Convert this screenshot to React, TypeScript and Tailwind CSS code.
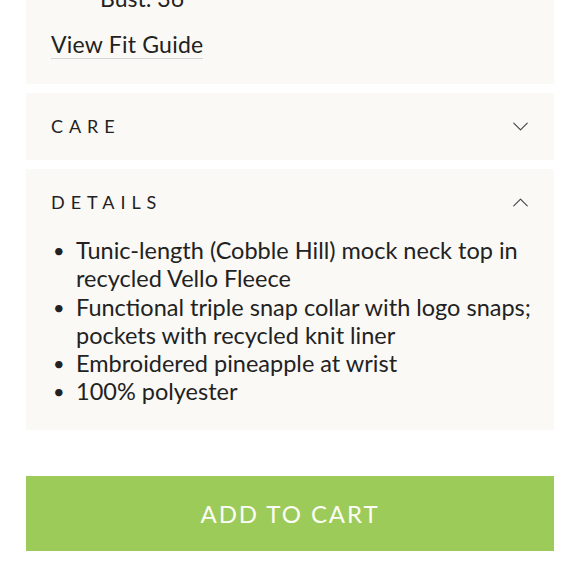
import { ChevronDown, ChevronUp } from 'lucide-react'

const details = [
  'Tunic-length (Cobble Hill) mock neck top in recycled Vello Fleece',
  'Functional triple snap collar with logo snaps; pockets with recycled knit liner',
  'Embroidered pineapple at wrist',
  '100% polyester',
]

export default function App() {
  return (
    <div className="w-[580px] h-[580px] overflow-hidden bg-white text-[#222] font-['Lato',sans-serif]">
      <div className="-mt-[22px] px-[26px] flex flex-col">

        {/* Fit */}
        <div className="bg-[#faf9f6] pl-[25px] pt-[6px] pb-[25px]">
          <p className="pl-[49px] text-[23px] leading-[28px]">Bust: 36</p>
          <a className="mt-[19px] inline-block text-[23px] leading-[26px] border-b border-[#d4d4d4] pb-[1px] tracking-[0.01em]">
            View Fit Guide
          </a>
        </div>

        {/* Care */}
        <div className="mt-[9px] h-[67px] bg-[#faf9f6] pl-[25px] pr-[20px] flex items-center justify-between">
          <span className="text-[18px] tracking-[0.33em] uppercase">Care</span>
          <ChevronDown size={27} strokeWidth={1} className="text-[#444]" />
        </div>

        {/* Details */}
        <div className="mt-[9px] h-[261px] bg-[#faf9f6] pl-[25px] pr-[20px] pt-[19px]">
          <div className="flex items-center justify-between h-[28px]">
            <span className="text-[18px] tracking-[0.33em] uppercase">Details</span>
            <ChevronUp size={27} strokeWidth={1} className="text-[#444]" />
          </div>
          <ul className="mt-[20px] flex flex-col">
            {details.map((d) => (
              <li key={d} className="flex text-[23.5px] leading-[28.3px]">
                <span className="w-[25px] shrink-0 pl-[2px] text-[20px]">•</span>
                <span>{d}</span>
              </li>
            ))}
          </ul>
        </div>

        {/* Add to cart */}
        <button className="mt-[46px] h-[75px] bg-[#9ccb5a] text-[#fbfdf6] text-[24px] tracking-[0.08em] uppercase">
          Add to cart
        </button>
      </div>
    </div>
  )
}
